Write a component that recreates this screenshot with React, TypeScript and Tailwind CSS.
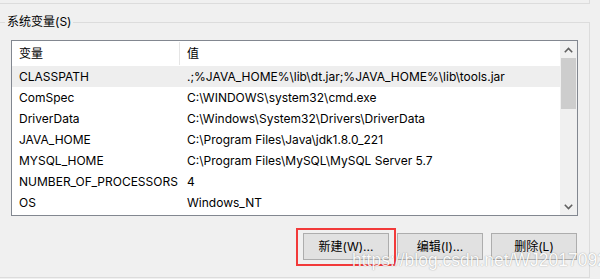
import React from "react";

const rows: [string, string][] = [
  ["CLASSPATH", ".;%JAVA_HOME%\\lib\\dt.jar;%JAVA_HOME%\\lib\\tools.jar"],
  ["ComSpec", "C:\\WINDOWS\\system32\\cmd.exe"],
  ["DriverData", "C:\\Windows\\System32\\Drivers\\DriverData"],
  ["JAVA_HOME", "C:\\Program Files\\Java\\jdk1.8.0_221"],
  ["MYSQL_HOME", "C:\\Program Files\\MySQL\\MySQL Server 5.7"],
  ["NUMBER_OF_PROCESSORS", "4"],
  ["OS", "Windows_NT"],
];

const font = { fontFamily: 'Inter, "Noto Sans CJK SC", sans-serif' };

function Chevron({ up }: { up?: boolean }) {
  return (
    <svg width="9" height="6" viewBox="0 0 9 6">
      <path
        d={up ? "M0.8 5.2 L4.5 1.5 L8.2 5.2" : "M0.8 0.8 L4.5 4.5 L8.2 0.8"}
        fill="none"
        stroke="#606060"
        strokeWidth="1.6"
      />
    </svg>
  );
}

function WinButton({ label }: { label: string }) {
  return (
    <button className="w-[86px] h-[27px] bg-[#e1e1e1] border border-[#adadad] text-[12px] leading-none text-black flex items-center justify-center">
      {label}
    </button>
  );
}

export default function App() {
  return (
    <div
      className="w-[600px] h-[279px] bg-[#f0f0f0] overflow-hidden relative text-[12px] leading-none text-black"
      style={font}
    >
      {/* remnant of upper group box */}
      <div className="w-[590px] h-[4px] border-b border-r border-[#dcdcdc]" />

      <div className="relative mt-[18px] w-[590px] h-[256px] border-t border-r border-b border-[#dcdcdc] pl-[11px] pt-[17px]">
        <span className="absolute left-[5px] top-[-9px] px-[2px] bg-[#f0f0f0] leading-[16px]">
          系统变量(S)
        </span>

        {/* list view */}
        <div className="w-[567px] h-[176px] border border-[#828790] bg-white flex">
          <div className="flex-1 flex flex-col">
            <div className="h-[25px] flex items-center">
              <div className="w-[168px] h-[23px] pl-[7px] flex items-center border-r border-[#e5e5e5]">
                变量
              </div>
              <div className="pl-[7px]">值</div>
            </div>
            {rows.map(([k, v], i) => (
              <div
                key={k}
                className={`h-[21px] flex items-center ${i === 0 ? "bg-[#eeeeee]" : ""}`}
              >
                <div className="w-[168px] pl-[7px] whitespace-nowrap">{k}</div>
                <div className="pl-[7px] whitespace-nowrap">{v}</div>
              </div>
            ))}
          </div>

          {/* scrollbar */}
          <div className="w-[17px] bg-[#f0f0f0] flex flex-col">
            <div className="h-[17px] flex items-center justify-center">
              <Chevron up />
            </div>
            <div className="mx-[1px] h-[51px] bg-[#cdcdcd]" />
            <div className="flex-1" />
            <div className="h-[17px] flex items-center justify-center">
              <Chevron />
            </div>
          </div>
        </div>

        <div className="mt-[17px] flex justify-end gap-[8px] pr-[1px] w-[567px]">
          <WinButton label="新建(W)..." />
          <WinButton label="编辑(I)..." />
          <WinButton label="删除(L)" />
        </div>
      </div>

      {/* highlight around the first button */}
      <div className="absolute left-[296px] top-[228px] w-[100px] h-[38px] border-[2px] border-[#f23a3a]" />

      {/* watermark */}
      <div
        className="absolute left-[352px] top-[249px] text-[17.5px] leading-[22px] text-white whitespace-nowrap pointer-events-none"
        style={{
          fontFamily: '"Liberation Sans", sans-serif',
          textShadow: "0 0 1px rgba(0,0,0,0.35), 0 0 2px rgba(0,0,0,0.15)",
          opacity: 0.85,
        }}
      >
        https://blog.csdn.net/WJ20170921
      </div>
    </div>
  );
}
